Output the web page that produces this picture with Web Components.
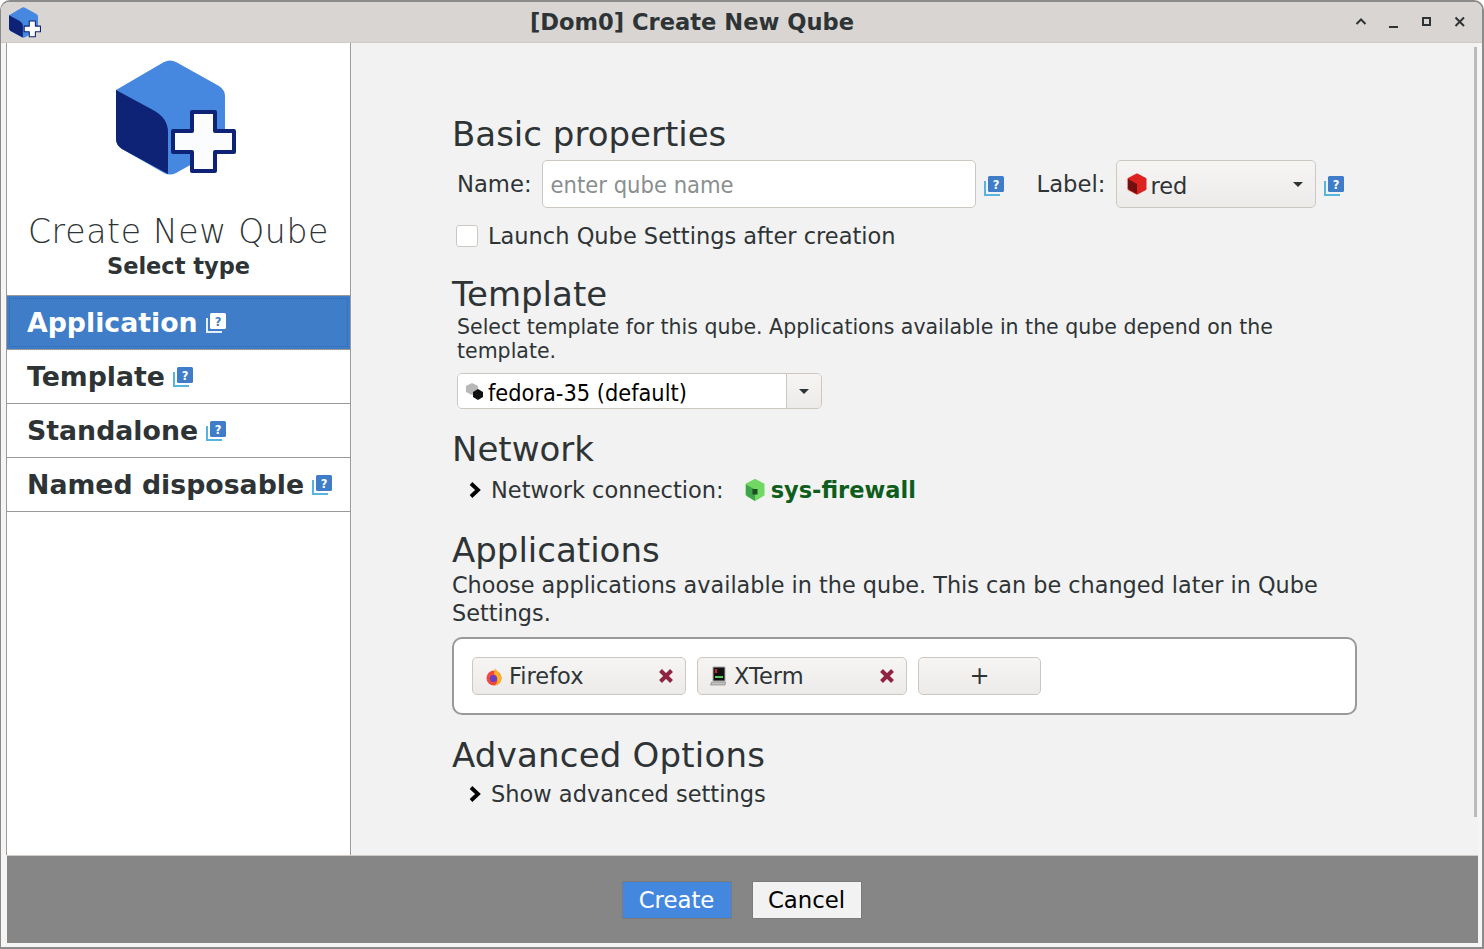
<!DOCTYPE html>
<html><head><meta charset="utf-8"><style>
html,body{margin:0;padding:0;background:#fff;}
body{font-family:"DejaVu Sans",sans-serif;color:#2e3436;}
</style></head><body>
<qube-window>
  <title-bar slot="top">[Dom0] Create New Qube</title-bar>
  <side-nav slot="side">
    <nav-item selected>Application</nav-item>
    <nav-item>Template</nav-item>
    <nav-item>Standalone</nav-item>
    <nav-item>Named disposable</nav-item>
  </side-nav>
  <main-pane slot="main"></main-pane>
  <foot-bar slot="foot"></foot-bar>
</qube-window>
<script>
function el(name, css, html){
  customElements.define(name, class extends HTMLElement{
    constructor(){super();const s=this.attachShadow({mode:'open'});s.innerHTML='<style>'+css+'</style>'+(typeof html==='function'?html(this):html);}
  });
}
const LOGO=`<svg viewBox="116 61 120 115" width="100%" height="100%" style="display:block">
<path d="M164 63Q170 60 176 63L219 87Q225 91 225 97V140Q225 146 219 150L176 174Q170 177 164 174L122 150Q116 146 116 140V91Z" fill="#4688df"/>
<path d="M116 91L153 111Q168 119 168 133V175L122 150Q116 146 116 140Z" fill="#0e2375"/>
<path d="M192 113H215V132H234V153H215V172H192V153H173V132H192Z" fill="#fbfcfd" stroke="#0e2375" stroke-width="4" stroke-linejoin="round"/>
</svg>`;
el('qube-logo',':host{display:block;width:var(--w,120px);height:var(--h,115px)}',LOGO);
el('help-icon',`:host{display:inline-block;width:20px;height:20px;vertical-align:middle;flex:none}svg{display:block}`,
 el2=>{const sel=el2.hasAttribute('light');const back=sel?'#e6ecf5':'#56b4de';const front=sel?'#fff':'#3f7dc9';const q=sel?'#3f7dc9':'#fff';
 return `<svg width="20" height="20" viewBox="0 0 20 20"><path d="M1 5V19H16" fill="none" stroke="${back}" stroke-width="2"/><rect x="4" y="0" width="16" height="16" rx="1.5" fill="${front}"/><text x="12" y="12.5" font-family="DejaVu Sans" font-weight="700" font-size="11.5" text-anchor="middle" fill="${q}">?</text></svg>`});
el('title-bar',`:host{display:flex;align-items:center;height:40px;background:#d9d5d2;border-bottom:1px solid #cfcac6;position:relative;font:700 22.6px "DejaVu Sans",sans-serif;color:#2e3436}
 .ic{width:32px;height:31px;margin-left:8px;--w:32px;--h:31px}
 .t{position:absolute;left:0;right:99px;top:0;bottom:0;display:flex;align-items:center;justify-content:center}
 .b{margin-left:auto;display:flex;gap:17px;padding-right:14px}
 svg{display:block}`,
 `<qube-logo class="ic"></qube-logo><div class="t"><slot></slot></div><div class="b">
 <svg width="16" height="16" viewBox="0 0 16 16" fill="none" stroke="#2e3436" stroke-width="2"><path d="M3.5 10L8 5.5L12.5 10"/></svg>
 <svg width="16" height="16" viewBox="0 0 16 16" fill="#2e3436"><rect x="3" y="12" width="9" height="2"/></svg>
 <svg width="16" height="16" viewBox="0 0 16 16" fill="none" stroke="#2e3436" stroke-width="2"><rect x="4" y="4" width="7" height="7"/></svg>
 <svg width="16" height="16" viewBox="0 0 16 16" fill="none" stroke="#2e3436" stroke-width="2"><path d="M3.5 3.5L12 12M12 3.5L3.5 12"/></svg></div>`);
el('qube-window',`:host{display:flex;flex-direction:column;box-sizing:border-box;width:1484px;height:949px;background:#f6f5f4;border:solid #8b8b8b;border-width:2px 2px 2px 1px;border-radius:10px 10px 0 0;overflow:hidden}
 .mid{flex:1;display:flex;min-height:0;margin:0 4px 0 5px;border-left:1px solid #9a9a9a}
 .foot{margin:0 4px 4px 6px}`,
 `<slot name="top"></slot><div class="mid"><slot name="side"></slot><slot name="main"></slot></div><div class="foot"><slot name="foot"></slot></div>`);
el('side-nav',`:host{display:flex;flex-direction:column;width:344px;box-sizing:border-box;background:#fff;border-right:1px solid #9a9a9a;flex:none}
 qube-logo{margin:17px 0 0 109px}
 h1{margin:37px 0 0;font:200 33px "DejaVu Sans",sans-serif;letter-spacing:.7px;text-align:center;color:#2e3436;line-height:40px}
 h2{margin:-1px 0 0;font:700 22.5px "DejaVu Sans",sans-serif;text-align:center;line-height:30px;color:#2e3436}
 .list{margin-top:14px;border-top:1px solid #9a9a9a}`,
 `<qube-logo></qube-logo><h1>Create New Qube</h1><h2>Select type</h2><div class="list"><slot></slot></div>`);
el('nav-item',`:host{display:flex;align-items:center;gap:8px;height:53px;padding-left:20px;border-bottom:1px solid #9a9a9a;font:700 26.75px "DejaVu Sans",sans-serif;color:#2e3436;position:relative}
 :host([selected]){background:#3f7dc9;color:#fff}
 :host([selected]) .f{position:absolute;inset:2px;border:1px dotted #2f68ad;pointer-events:none}`,
 el2=>`<slot></slot><help-icon ${el2.hasAttribute('selected')?'light':''}></help-icon>${el2.hasAttribute('selected')?'<div class="f"></div>':''}`);
el('sec-head',`:host{display:block;font:400 34px/38px "DejaVu Sans",sans-serif;color:#2e3436}`,'<slot></slot>');
el('text-field',`:host{display:flex;align-items:center;box-sizing:border-box;height:48px;background:#fff;border:1px solid #cdc7c2;border-radius:5px;padding:1px 0 0 8px;font:23.5px "DejaVu Sans Condensed","DejaVu Sans",sans-serif;font-stretch:condensed;color:#8a8f8f}`,'<slot></slot>');
el('label-combo',`:host{display:flex;align-items:center;box-sizing:border-box;height:48px;width:200px;background:linear-gradient(#f6f5f4,#edebe9);border:1px solid #cdc7c2;border-radius:5px;padding:0 12px 0 10px;gap:3px;font:22.5px "DejaVu Sans",sans-serif;color:#2e3436}
 .x{padding-top:3px}
 .a{margin-left:auto;width:0;height:0;border:5px solid transparent;border-top:5px solid #2e3436;border-bottom:0}`,
 `<svg width="20" height="22" viewBox="0 0 20 22"><path d="M10 1.5L18.5 6V16L10 20.5L1.5 16V6Z" fill="#dc2320" stroke="#dc2320" stroke-linejoin="round" stroke-width="2"/><path d="M1 6L10 11V21L2 16.5L1 15Z" fill="#6f1111"/></svg><span class="x"><slot></slot></span><span class="a"></span>`);
el('check-row',`:host{display:flex;align-items:center;gap:10px;font:22.5px "DejaVu Sans",sans-serif}
 .c{width:20px;height:20px;background:#fff;border:1px solid #cdc7c2;border-radius:3px;flex:none}`,'<div class="c"></div><slot></slot>');
el('tmpl-combo',`:host{display:flex;box-sizing:border-box;width:365px;height:36px;border:1px solid #cdc7c2;border-radius:5px;overflow:hidden;font:23.3px "DejaVu Sans Condensed","DejaVu Sans",sans-serif;font-stretch:condensed;color:#000}
 .l{flex:1;display:flex;align-items:center;background:#fff;gap:4px;padding-left:8px}
 .x{padding-top:2px}
 .r{width:34px;border-left:1px solid #cdc7c2;background:linear-gradient(#f6f5f4,#edebe9);display:flex;align-items:center;justify-content:center}
 .a{width:0;height:0;border:5px solid transparent;border-top:5px solid #2e3436;border-bottom:0}`,
 `<div class="l"><svg width="18" height="18" viewBox="0 0 18 18"><path d="M6 1L12 4V10L6 13L0 10V4Z" fill="#b8b8b8"/><path d="M12 7L17 10V15L12 18L7 15V10Z" fill="#111"/></svg><span class="x"><slot></slot></span></div><div class="r"><span class="a"></span></div>`);
el('expand-row',`:host{display:flex;align-items:center;height:30px;padding-left:17px;font:22.5px "DejaVu Sans",sans-serif;color:#2e3436}
 svg{margin-right:9px;flex:none}`,
 `<svg width="13" height="16" viewBox="0 0 13 16" fill="none" stroke="#000" stroke-width="3.8"><path d="M2 1.5L9 8L2 14.5"/></svg><slot></slot>`);
el('app-chip',`:host{display:flex;align-items:center;box-sizing:border-box;height:38px;background:linear-gradient(#f6f5f4,#edebe9);border:1px solid #cdc7c2;border-radius:5px;padding:0 11px 0 13px;font:22.5px "DejaVu Sans",sans-serif;color:#2e3436}
 .s{margin-left:auto;display:block}
 ::slotted(svg){margin-right:7px}`,
 `<slot name="i"></slot><slot></slot><svg class="s" width="16" height="16" viewBox="0 0 16 16" stroke="#8e2344" stroke-width="4" fill="none"><path d="M2.5 2.5L13.5 13.5M13.5 2.5L2.5 13.5"/></svg>`);
el('plain-btn',`:host{display:flex;align-items:center;justify-content:center;box-sizing:border-box;height:38px;background:linear-gradient(#f6f5f4,#edebe9);border:1px solid #cdc7c2;border-radius:5px;font:24px "DejaVu Sans",sans-serif;color:#2e3436}`,'<slot></slot>');
el('foot-btn',`:host{display:flex;align-items:center;justify-content:center;box-sizing:border-box;width:110px;height:38px;border:1px solid #7b7b7b;background:#f2f2f2;font:22.8px "DejaVu Sans",sans-serif;color:#000}
 :host([primary]){background:#4387df;color:#fff}`,'<slot></slot>');
el('foot-bar',`:host{display:flex;justify-content:center;align-items:center;gap:20px;height:88px;background:#868686;padding-right:2px;border-top:1px solid #cfcac6;box-sizing:border-box}`,
 `<foot-btn primary>Create</foot-btn><foot-btn>Cancel</foot-btn>`);
el('main-pane',`:host{display:block;flex:1;min-width:0;background:#f2f2f2;position:relative;padding:72px 0 0 100px;margin-left:1px;box-sizing:border-box;font-family:"DejaVu Sans",sans-serif;color:#2e3436}
 .sb{position:absolute;right:1px;top:4px;width:3px;height:770px;background:#bbb}
 .row{display:flex;align-items:center;margin-top:7px;padding-left:5px;font-size:22.7px}
 .name{width:434px;margin-left:10px}
 .row help-icon{margin:3px 0 0 8px}
 .lab{margin-left:33px;margin-right:11px}
 check-row{margin:15px 0 0 4px}
 .t{margin-top:26px}
 .d1{margin:2px 0 0 5px;font-size:20.5px;line-height:24px;width:880px}
 tmpl-combo{margin:10px 0 0 5px}
 .n{margin-top:21px}
 .n+expand-row{margin-top:7px}
 .a{margin-top:26px}
 .d2{margin:2px 0 0;font-size:22.35px;line-height:28px;width:900px}
 .box{box-sizing:border-box;display:flex;gap:11px;width:905px;height:78px;margin-top:10px;padding:18px;background:#fff;border:2px solid #999;border-radius:10px}
 .adv{margin-top:21px;letter-spacing:.2px}
 .adv+expand-row{margin-top:5px}
 .g{color:#0f5d1c;font-weight:700;margin-left:6px}
 .ci{margin-left:21px;flex:none}`,
 `<div class="sb"></div>
 <sec-head>Basic properties</sec-head>
 <div class="row"><span>Name:</span><text-field class="name">enter qube name</text-field><help-icon></help-icon><span class="lab">Label:</span><label-combo>red</label-combo><help-icon></help-icon></div>
 <check-row>Launch Qube Settings after creation</check-row>
 <sec-head class="t">Template</sec-head>
 <div class="d1">Select template for this qube. Applications available in the qube depend on the template.</div>
 <tmpl-combo>fedora-35 (default)</tmpl-combo>
 <sec-head class="n">Network</sec-head>
 <expand-row>Network connection:<svg class="ci" width="20" height="22" viewBox="0 0 20 22"><path d="M10 1L18.5 5.5V16L10 21L1.5 16V5.5Z" fill="#71d864" stroke="#71d864" stroke-linejoin="round" stroke-width="2"/><path d="M1 5.5L10 10.5V22L2 17L1 15Z" fill="#3fa34a"/><rect x="7.5" y="10" width="5" height="5.5" fill="#1c4d22"/></svg><span class="g">sys-firewall</span></expand-row>
 <sec-head class="a">Applications</sec-head>
 <div class="d2">Choose applications available in the qube. This can be changed later in Qube Settings.</div>
 <div class="box">
  <app-chip style="width:214px"><svg slot="i" width="16" height="20" viewBox="0 0 16 20"><circle cx="8" cy="12" r="7.5" fill="#f0483f"/><path d="M9 2C9 4 15.5 7 15.5 12A7.5 7.5 0 0 1 8 19.5C12 18 13 12 8 8Z" fill="#ffb21f"/><circle cx="7.5" cy="12.5" r="3.6" fill="#6a3ec2"/></svg>Firefox</app-chip>
  <app-chip style="width:210px;padding-left:12px"><svg slot="i" width="17" height="20" viewBox="0 0 17 20"><path d="M3 1H15V15H3Z" fill="#111" stroke="#aaa"/><path d="M1.5 16H15.5L15 19H0.5Z" fill="#c4c4c4" stroke="#777" stroke-width=".6"/><path d="M5 3L7 7M7 3L5 7" stroke="#e33"/><path d="M5 11H13" stroke="#5c5" stroke-width="2"/></svg>XTerm</app-chip>
  <plain-btn style="width:123px">+</plain-btn>
 </div>
 <sec-head class="adv">Advanced Options</sec-head>
 <expand-row>Show advanced settings</expand-row>`);
</script>
</body></html>
